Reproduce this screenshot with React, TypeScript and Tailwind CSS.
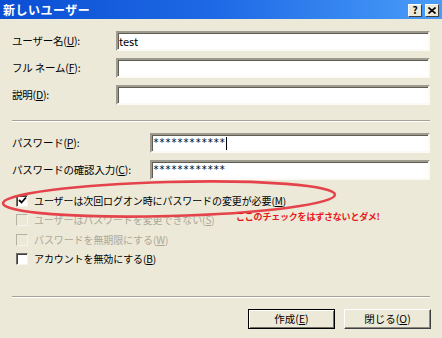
import React from 'react'

const FONT = "font-['Noto_Sans_CJK_JP','Noto_Sans',sans-serif]"

const sunken =
  'bg-white border-2 border-t-[#9d9b8f] border-l-[#9d9b8f] border-r-[#fbfaf5] border-b-[#fbfaf5] shadow-[inset_1px_1px_0_#5f5d52]'

function Field({ label, labelWidth, value, cursor }: { label: React.ReactNode; labelWidth: string; value?: string; cursor?: boolean }) {
  return (
    <div className="flex items-center h-[20px]">
      <div className={`${labelWidth} shrink-0 text-[10.5px] tracking-[-0.2px] leading-none text-black`}>{label}</div>
      <div className={`flex-1 h-[20px] ${sunken} flex items-center pl-[1px] text-[11px] leading-none`}>
        <span className={value && value.startsWith('*') ? "font-['DejaVu_Sans_Mono',monospace] text-[10px]" : ''}>{value}</span>
        {cursor && <span className="w-px h-[13px] bg-black ml-[1px]" />}
      </div>
    </div>
  )
}

function Check({ checked, disabled, children }: { checked?: boolean; disabled?: boolean; children: React.ReactNode }) {
  return (
    <div className="flex items-center h-[19.5px] pl-[4px] gap-[6px]">
      <div
        className={`w-[12px] h-[12px] shrink-0 flex items-center justify-center border border-t-[#6f6d62] border-l-[#6f6d62] border-r-[#f5f4ec] border-b-[#f5f4ec] ${
          disabled ? 'bg-[#ece9d8] border-t-[#b5b2a5] border-l-[#b5b2a5]' : 'bg-white shadow-[inset_1px_1px_0_#404040]'
        }`}
      >
        {checked && (
          <svg width="9" height="9" viewBox="0 0 9 9">
            <path d="M1 4 L3.5 6.5 L8 1.5" stroke="#000" strokeWidth="1.8" fill="none" />
          </svg>
        )}
      </div>
      <span className={`text-[10px] tracking-[-0.1px] leading-none whitespace-nowrap ${disabled ? 'text-[#aca899]' : 'text-black'}`}>{children}</span>
    </div>
  )
}

function Sep() {
  return <div className="h-[2px] border-t border-t-[#a5a294] border-b border-b-white" />
}

function Btn({ children, def }: { children: React.ReactNode; def?: boolean }) {
  return (
    <button
      className={`w-[87px] h-[20px] bg-[#ece9d8] text-[10.5px] leading-none flex items-center justify-center border ${
        def ? 'border-black shadow-[inset_1px_1px_0_#fff,inset_-1px_-1px_0_#716f64]' : 'border-t-white border-l-white border-r-[#404040] border-b-[#404040] shadow-[inset_-1px_-1px_0_#8c8a7e]'
      }`}
    >
      {children}
    </button>
  )
}

export default function App() {
  return (
    <div className={`${FONT} relative w-[442px] h-[338px] overflow-hidden bg-[#ece9d8]`}>
      {/* title bar */}
      <div className="h-[19px] flex items-center justify-between pl-[3px] pr-[3px] bg-gradient-to-r from-[#0a4ed3] via-[#1f6ae6] to-[#4a9cf8]">
        <span className="text-white font-bold text-[12px] leading-none tracking-[0.5px]">新しいユーザー</span>
        <div className="flex gap-[3px] pt-[1px]">
          <div className="w-[14px] h-[13px] bg-[#ece9d8] border border-t-white border-l-white border-r-[#404040] border-b-[#404040] flex items-center justify-center text-[10px] font-bold leading-none text-black">?</div>
          <div className="w-[14px] h-[13px] bg-[#ece9d8] border border-t-white border-l-white border-r-[#404040] border-b-[#404040] flex items-center justify-center">
            <svg width="8" height="7" viewBox="0 0 8 7">
              <path d="M0.5 0.5 L7.5 6.5 M7.5 0.5 L0.5 6.5" stroke="#000" strokeWidth="1.6" />
            </svg>
          </div>
        </div>
      </div>

      <div className="flex flex-col pl-[12px] pr-[12px]">
        <div className="flex flex-col gap-[7px] mt-[12px]">
          <Field label={<>ユーザー名(<u>U</u>):</>} labelWidth="w-[104px]" value="test" />
          <Field label={<>フル ネーム(<u>F</u>):</>} labelWidth="w-[104px]" />
          <Field label={<>説明(<u>D</u>):</>} labelWidth="w-[104px]" />
        </div>

        <div className="mt-[15px]">
          <Sep />
        </div>

        <div className="flex flex-col gap-[7px] mt-[11px]">
          <Field label={<>パスワード(<u>P</u>):</>} labelWidth="w-[138px]" value="************" cursor />
          <Field label={<>パスワードの確認入力(<u>C</u>):</>} labelWidth="w-[138px]" value="************" />
        </div>

        <div className="flex flex-col mt-[11px]">
          <Check checked>ユーザーは次回ログオン時にパスワードの変更が必要(<u>M</u>)</Check>
          <Check disabled>ユーザーはパスワードを変更できない(<u>S</u>)</Check>
          <Check disabled>パスワードを無期限にする(<u>W</u>)</Check>
          <Check>アカウントを無効にする(<u>B</u>)</Check>
        </div>

        <div className="mt-[27px]">
          <Sep />
        </div>

        <div className="flex justify-end gap-[9px] mt-[11px] -mr-[1px]">
          <Btn def>作成(<u>E</u>)</Btn>
          <Btn>閉じる(<u>O</u>)</Btn>
        </div>
      </div>

      {/* annotation */}
      <svg className="absolute left-0 top-0 pointer-events-none" width="442" height="338">
        <ellipse cx="169" cy="199" rx="166" ry="17" transform="rotate(-1.5 169 199)" fill="none" stroke="#e5434c" strokeWidth="2.6" />
      </svg>
      <div className="absolute left-[236px] top-[212px] text-[9px] tracking-[-0.2px] leading-none font-bold text-[#e81818] whitespace-nowrap">
        ここのチェックをはずさないとダメ!
      </div>
    </div>
  )
}
